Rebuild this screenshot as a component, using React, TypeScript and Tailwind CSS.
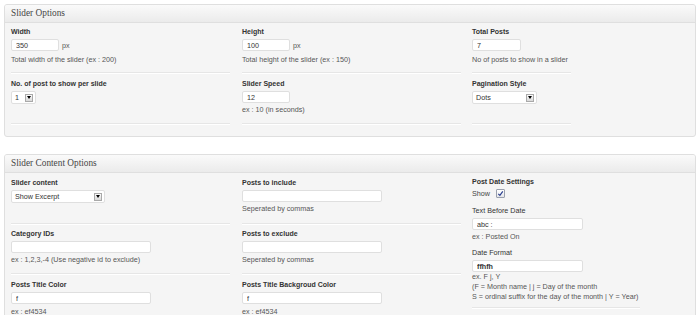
import type { ReactNode } from "react"

function Label({ children }: { children: ReactNode }) {
  return <div className="text-[7px] font-bold leading-[9px] text-[#333]">{children}</div>
}

function Help({ children, className = "" }: { children: ReactNode; className?: string }) {
  return <div className={`text-[7.2px] leading-[9px] text-[#555] ${className}`}>{children}</div>
}

function TextInput({ value, className }: { value: string; className: string }) {
  return (
    <input
      readOnly
      value={value}
      className={`block h-[12px] rounded-[2px] border border-[#dfdfdf] bg-white pl-[4px] text-[7.2px] leading-[10px] text-[#333] outline-none ${className}`}
    />
  )
}

function Select({ value, className }: { value: string; className: string }) {
  return (
    <div
      className={`flex h-[13px] items-center justify-between rounded-[2px] border border-[#dfdfdf] bg-white pl-[3px] pr-[2px] text-[7.2px] leading-[9px] text-[#333] ${className}`}
    >
      <span>{value}</span>
      <span className="flex h-[8px] w-[8px] items-center justify-center border border-[#a9a9a9] bg-linear-to-b from-[#fbfbfb] to-[#d9d9d9]">
        <span className="border-x-[2px] border-t-[3px] border-x-transparent border-t-black" />
      </span>
    </div>
  )
}

function Panel({ title, children }: { title: string; children: ReactNode }) {
  return (
    <div className="w-[692px] overflow-hidden rounded-[3px] border border-[#dfdfdf] bg-[#f5f5f5]">
      <div className="h-[18px] border-b border-[#dfdfdf] bg-linear-to-b from-[#fafafa] to-[#ebebeb] pl-[6px] font-['Liberation_Serif',Georgia,serif] text-[9.3px] leading-[17px] text-[#464646]">
        {title}
      </div>
      {children}
    </div>
  )
}

const divider = "border-b border-[#e6e6e6] shadow-[0_1px_0_#ffffff]"

export default function App() {
  return (
    <div className="h-[315px] w-[700px] overflow-hidden bg-white pl-[4px] pt-[4px] font-['Liberation_Sans',Arial,sans-serif] text-[7px] leading-[9px]">
      {/* Slider Options */}
      <Panel title="Slider Options">
        <div className="grid grid-cols-[231px_230px_1fr] pb-[12px] pl-[6px]">
          <div className={`h-[50px] w-[219px] pt-[4px] ${divider}`}>
            <Label>Width</Label>
            <div className="mt-[3px] flex items-center gap-[3px]">
              <TextInput value="350" className="w-[48px]" />
              <span className="text-[7.2px] text-[#555]">px</span>
            </div>
            <Help className="mt-[4px]">Total width of the slider (ex : 200)</Help>
          </div>
          <div className={`h-[50px] w-[219px] pt-[4px] ${divider}`}>
            <Label>Height</Label>
            <div className="mt-[3px] flex items-center gap-[3px]">
              <TextInput value="100" className="w-[48px]" />
              <span className="text-[7.2px] text-[#555]">px</span>
            </div>
            <Help className="mt-[4px]">Total height of the slider (ex : 150)</Help>
          </div>
          <div className={`h-[50px] w-[99px] pt-[4px] ${divider}`}>
            <Label>Total Posts</Label>
            <TextInput value="7" className="mt-[3px] w-[49px]" />
            <Help className="mt-[4px] whitespace-nowrap">No of posts to show in a slider</Help>
          </div>

          <div className={`h-[51px] w-[219px] pt-[6px] ${divider}`}>
            <Label>No. of post to show per slide</Label>
            <Select value="1" className="mt-[3px] w-[25px]" />
          </div>
          <div className={`h-[51px] w-[219px] pt-[6px] ${divider}`}>
            <Label>Slider Speed</Label>
            <TextInput value="12" className="mt-[3px] w-[48px]" />
            <Help className="mt-[2px]">ex : 10 (in seconds)</Help>
          </div>
          <div className={`h-[51px] w-[99px] pt-[6px] ${divider}`}>
            <Label>Pagination Style</Label>
            <Select value="Dots" className="mt-[3px] w-[65px]" />
          </div>
        </div>
      </Panel>

      {/* Slider Content Options */}
      <div className="mt-[17px]">
        <Panel title="Slider Content Options">
          <div className="grid grid-cols-[231px_230px_1fr] pb-[12px] pl-[6px]">
            <div className={`col-start-1 row-start-1 h-[51px] w-[219px] pt-[5px] ${divider}`}>
              <Label>Slider content</Label>
              <Select value="Show Excerpt" className="mt-[3px] w-[94px]" />
            </div>
            <div className={`col-start-2 row-start-1 h-[51px] w-[219px] pt-[5px] ${divider}`}>
              <Label>Posts to include</Label>
              <TextInput value="" className="mt-[3px] w-[140px]" />
              <Help className="mt-[2px]">Seperated by commas</Help>
            </div>

            <div className={`col-start-1 row-start-2 h-[50px] w-[219px] pt-[5px] ${divider}`}>
              <Label>Category IDs</Label>
              <TextInput value="" className="mt-[3px] w-[140px]" />
              <Help className="mt-[2px]">ex : 1,2,3,-4 (Use negative id to exclude)</Help>
            </div>
            <div className={`col-start-2 row-start-2 h-[50px] w-[219px] pt-[5px] ${divider}`}>
              <Label>Posts to exclude</Label>
              <TextInput value="" className="mt-[3px] w-[140px]" />
              <Help className="mt-[2px]">Seperated by commas</Help>
            </div>

            <div className="col-start-1 row-start-3 h-[50px] w-[219px] pt-[6px]">
              <Label>Posts Title Color</Label>
              <TextInput value="f" className="mt-[3px] w-[140px]" />
              <Help className="mt-[3px]">ex : ef4534</Help>
            </div>
            <div className="col-start-2 row-start-3 h-[50px] w-[219px] pt-[6px]">
              <Label>Posts Title Backgroud Color</Label>
              <TextInput value="f" className="mt-[3px] w-[140px]" />
              <Help className="mt-[3px]">ex : ef4534</Help>
            </div>

            {/* Post date settings column */}
            <div className={`col-start-3 row-span-3 row-start-1 self-start w-[168px] pb-[5px] pt-[4px] ${divider}`}>
              <Label>Post Date Settings</Label>
              <div className="mt-[2px] flex h-[10px] items-center gap-[6px] text-[7.2px] text-[#444]">
                <span>Show</span>
                <span className="flex h-[9px] w-[9px] items-center justify-center rounded-[1px] border border-[#9aa0ad] bg-linear-to-b from-[#ffffff] to-[#e4e6ea]">
                  <svg width="7" height="7" viewBox="0 0 7 7">
                    <path d="M1.3 3.8 L2.9 5.4 L5.8 1.4" fill="none" stroke="#2b3f8f" strokeWidth="1.2" />
                  </svg>
                </span>
              </div>
              <div className="mt-[8px] text-[7.2px] leading-[9px] text-[#333]">Text Before Date</div>
              <TextInput value="abc :" className="mt-[3px] w-[111px]" />
              <Help className="mt-[2px] leading-[10px]">ex : Posted On</Help>
              <div className="mt-[6px] text-[7.2px] leading-[9px] text-[#333]">Date Format</div>
              <TextInput value="ffhfh" className="mt-[3px] w-[111px] font-bold" />
              <div className="whitespace-nowrap text-[7.2px] leading-[10px] text-[#555]">
                <div>ex. F j, Y</div>
                <div>(F = Month name | j = Day of the month</div>
                <div>S = ordinal suffix for the day of the month | Y = Year)</div>
              </div>
            </div>
          </div>
        </Panel>
      </div>
    </div>
  )
}
